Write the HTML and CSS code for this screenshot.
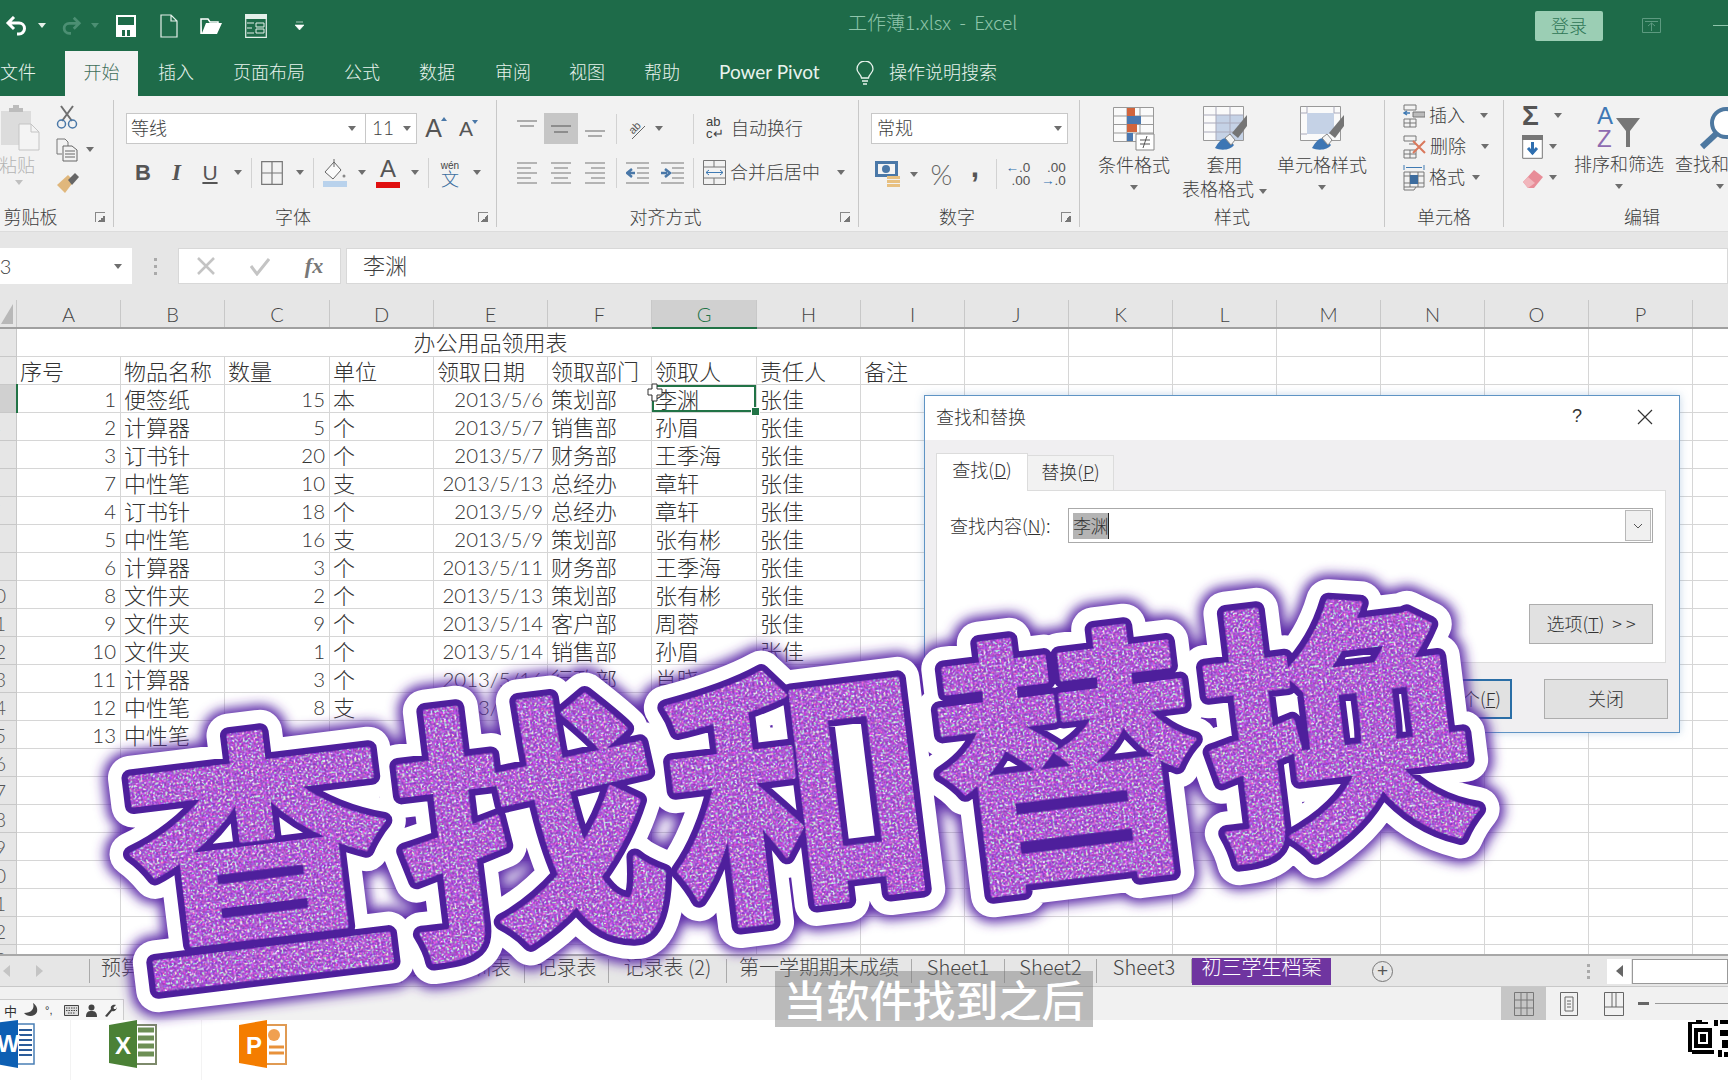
FILE: index.html
```html
<!DOCTYPE html>
<html lang="zh-CN">
<head>
<meta charset="utf-8">
<title>工作薄1.xlsx - Excel</title>
<link rel="stylesheet" href="styles.css">
</head>
<body>
<div class="app">
  <header class="titlebar">
    <div class="qat">
      <svg width="24" height="20" viewBox="0 0 24 20"><path d="M9 1 3 7l6 6M3 7h11a5.500 5.500 0 0 1 0 11h-2" fill="none" stroke="#fff" stroke-width="3"/></svg>
      <i class="caret light"></i>
      <svg class="redo" width="22" height="20" viewBox="0 0 24 20"><path d="M15 1l6 6-6 6M21 7H10a5.500 5.500 0 0 0 0 11h2" fill="none" stroke="#4c8f73" stroke-width="3"/></svg>
      <i class="caret dim"></i>
      <svg class="save" width="20" height="22" viewBox="0 0 20 22"><path d="M1 1h18v20H1z" fill="#1e6b49" stroke="#fff" stroke-width="2"/><path d="M1 10h18v11H1z" fill="#fff"/><path d="M6 15h3v6H6zM11 15h3v6h-3z" fill="#1e6b49"/></svg>
      <svg class="newdoc" width="18" height="24" viewBox="0 0 18 24"><path d="M1 1h10l6 6v16H1zM11 1v6h6" fill="none" stroke="#e4f0ea" stroke-width="1.200"/></svg>
      <svg class="open" width="23" height="20" viewBox="0 0 23 20"><path d="M1 6V18h16l5-11H6L2 17" fill="#fff"/><path d="M1 18V3h7l2 3h8v2" fill="none" stroke="#fff" stroke-width="1.500"/></svg>
      <svg class="form" width="22" height="24" viewBox="0 0 22 24"><path d="M.7.7h20.600v22.600H.7z" fill="none" stroke="#e4f0ea" stroke-width="1.200"/><path d="M0 0h22v5H0z" fill="#e4f0ea"/><path d="M2 9h7M2 14h5M2 19h7M11 9h8v4h-8zM11 15h8v4h-8z" fill="none" stroke="#e4f0ea"/></svg>
      <svg class="custom" width="9" height="10" viewBox="0 0 9 10"><path d="M1 1h7M0 4h9l-4.500 5z" fill="#fff" stroke="#fff" stroke-width=".6"/></svg>
    </div>
    <div class="doc-title">工作薄1.xlsx&nbsp; - &nbsp;Excel</div>
    <div class="win">
      <span class="login">登录</span>
      <svg class="restore" width="20" height="16" viewBox="0 0 20 16"><path d="M.5.500h18v14H.5zM3 3.500h13M9.500 13V5M6 8l3.500-3L13 8" fill="none" stroke="#5d9a80"/></svg>
      <i class="minimize"></i>
    </div>
  </header>

  <nav class="tabs">
    <span class="tab t-file">文件</span>
    <span class="tab active">开始</span>
    <span class="tab t-ins">插入</span>
    <span class="tab t-page">页面布局</span>
    <span class="tab t-f">公式</span>
    <span class="tab t-d">数据</span>
    <span class="tab t-r">审阅</span>
    <span class="tab t-v">视图</span>
    <span class="tab t-h">帮助</span>
    <span class="tab t-pp">Power Pivot</span>
    <span class="tab t-tell">
      <svg width="18" height="26" viewBox="0 0 18 26"><path d="M5.500 17C5 13 1 12 1 8a8 8 0 0 1 16 0c0 4-4 5-4.500 9zM6 20h6M7 23h4" fill="none" stroke="#e8f3ed" stroke-width="1.300"/></svg>
      <span class="tell-text">操作说明搜索</span>
    </span>
  </nav>

  <section class="ribbon">
    <div class="group g-clip">
      <div class="gbody clip-body">
        <div class="paste">
          <svg width="42" height="46" viewBox="0 0 42 46"><path d="M2 6h30v34H2z" fill="#dcdcdc"/><path d="M10 7V3h4V0h6v3h4v4z" fill="#bcbcbc"/><path d="M20 19h12l8 8v18H20z" fill="#f4f4f4" stroke="#c4c4c4"/><path d="M32 19v8h8" fill="none" stroke="#c4c4c4"/></svg>
          <span class="paste-l">粘贴</span>
          <i class="caret faint"></i>
        </div>
        <div class="clip-tools">
          <div class="cliprow"><svg width="22" height="24" viewBox="0 0 22 24"><path d="M5 1l11 15M17 1L6 16" stroke="#6f6f6f" stroke-width="2"/><circle cx="5.500" cy="19" r="4" fill="none" stroke="#4a78a8" stroke-width="1.500"/><circle cx="16.500" cy="19" r="4" fill="none" stroke="#4a78a8" stroke-width="1.500"/></svg></div>
          <div class="cliprow"><svg width="22" height="24" viewBox="0 0 22 24"><path d="M1 1h8l3 3v4M1 1v15h5" fill="none" stroke="#777"/><path d="M7 8h9l5 4v11H7zM9 13h10M9 16h10M9 19h10" fill="none" stroke="#666"/></svg><i class="caret clipc"></i></div>
          <div class="cliprow"><svg width="24" height="22" viewBox="0 0 24 22"><path d="M1 13 12 3l6 6-9 12z" fill="#e0b77c"/><path d="M12 8 19 1l4 4-7 8z" fill="#666"/></svg></div>
        </div>
      </div>
      <div class="glabel launch">剪贴板<i class="launcher"></i></div>
    </div>

    <div class="group g-font">
      <div class="gbody">
        <div class="row fr1">
          <div class="combo combo-font"><span class="c-name">等线</span><i class="caret"></i><span class="c-size">11</span><i class="caret"></i></div>
          <span class="grow-a">A<i class="up"></i></span>
          <span class="shrink-a">A<i class="down"></i></span>
        </div>
        <div class="row fr2">
          <b class="fmt">B</b><em class="fmt it">I</em><u class="fmt un">U</u><i class="caret"></i><i class="vsep"></i>
          <svg width="22" height="24" viewBox="0 0 22 24"><path d="M.7.700h20.600v22.600H.7zM11 1v22M1 12h20" fill="none" stroke="#777" stroke-width="1.200"/></svg><i class="caret"></i><i class="vsep"></i>
          <svg width="26" height="28" viewBox="0 0 26 28"><path d="M12 3 3 13l8 7 8-9z" fill="#fafafa" stroke="#666"/><path d="M12 0v8" stroke="#666"/><circle cx="22" cy="17" r="1.500" fill="#888"/><path d="M1 22h24v6H1z" fill="#b9d2ec"/></svg><i class="caret"></i>
          <span class="font-color">A</span><i class="caret"></i><i class="vsep"></i>
          <span class="wen"><small>wén</small>文</span><i class="caret"></i>
        </div>
      </div>
      <div class="glabel launch">字体<i class="launcher"></i></div>
    </div>

    <div class="group g-align">
      <div class="gbody">
        <div class="row ar">
          <svg width="20" height="20" viewBox="0 0 20 20"><path d="M0 2h20M3 7h14" stroke="#666"/></svg>
          <span class="on"><svg width="20" height="20" viewBox="0 0 20 20"><path d="M0 7h20M3 13h14" stroke="#555"/></svg></span>
          <svg width="20" height="20" viewBox="0 0 20 20"><path d="M0 12h20M3 17h14" stroke="#666"/></svg>
          <i class="vsep"></i>
          <svg width="20" height="22" viewBox="0 0 20 22"><path d="M5 21 18 8" stroke="#666"/><text class="orient" x="1" y="13" transform="rotate(-45 8 9)">ab</text></svg>
          <i class="caret"></i>
          <span></span><i class="vsep"></i>
          <span class="cmd"><span class="abc">ab<br>c↵</span>自动换行</span>
        </div>
        <div class="row ar">
          <svg width="20" height="24" viewBox="0 0 20 24"><path d="M0 2h20M0 7h14M0 12h20M0 17h14M0 22h20" stroke="#777"/></svg>
          <svg width="20" height="24" viewBox="0 0 20 24"><path d="M0 2h20M3 7h14M0 12h20M3 17h14M0 22h20" stroke="#777"/></svg>
          <svg width="20" height="24" viewBox="0 0 20 24"><path d="M0 2h20M6 7h14M0 12h20M6 17h14M0 22h20" stroke="#777"/></svg>
          <i class="vsep"></i>
          <svg width="23" height="24" viewBox="0 0 23 24"><path d="M0 2h23M11 7h12M11 12h12M11 17h12M0 22h23" stroke="#777"/><path d="M9 12H3M6 8l-5 4 5 4" fill="none" stroke="#4a78a8" stroke-width="2.500"/></svg>
          <svg width="23" height="24" viewBox="0 0 23 24"><path d="M0 2h23M11 7h12M11 12h12M11 17h12M0 22h23" stroke="#777"/><path d="M0 12h6M4 8l5 4-5 4" fill="none" stroke="#4a78a8" stroke-width="2.500"/></svg>
          <span></span><i class="vsep"></i>
          <span class="cmd merge"><svg width="23" height="25" viewBox="0 0 23 25"><path d="M.5.500h22v24H.5zM1 7h21M1 18h21M11 1v6M11 18v6" fill="none" stroke="#777"/><path d="M3 12.500h17M6 10l-3 2.500L6 15M17 10l3 2.500-3 2.500" fill="none" stroke="#3f7ab3"/></svg><span class="merge-text">合并后居中</span><i class="caret"></i></span>
        </div>
      </div>
      <div class="glabel launch">对齐方式<i class="launcher"></i></div>
    </div>

    <div class="group g-num">
      <div class="gbody">
        <div class="row nr1"><div class="combo combo-num"><span>常规</span><i class="caret"></i></div></div>
        <div class="row nr2">
          <svg width="26" height="26" viewBox="0 0 26 26"><path d="M0 0h23v16H0z" fill="#4a78a8"/><path d="M3 3h17v10H3z" fill="#f4f4f4"/><circle cx="11" cy="8" r="4" fill="#4a78a8"/><path d="M12 15h13v3H12zM12 19h13v3H12zM12 23h13v3H12z" fill="#e8c080"/></svg>
          <i class="caret"></i>
          <span class="pct">%</span>
          <span class="comma">,</span>
          <i class="vsep"></i>
          <span class="dec"><span><b>←</b>.0</span><span>.00</span></span>
          <span class="dec"><span>.00</span><span><b>→</b>.0</span></span>
        </div>
      </div>
      <div class="glabel launch">数字<i class="launcher"></i></div>
    </div>

    <div class="group g-style">
      <div class="gbody style-body">
        <div class="big">
          <svg width="42" height="44" viewBox="0 0 42 44"><path d="M.5.500h40v34H.5zM.5 9h40M.5 17.500h40M.5 26h40M14 .5v34M27 .5v34" fill="#fafafa" stroke="#999"/><path d="M14 1h8v8h-8z" fill="#d1643c"/><path d="M14 9h14v8H14z" fill="#4a78b0"/><path d="M14 17h10v8H14z" fill="#d1643c"/><path d="M14 26h6v8h-6z" fill="#4a78b0"/><path d="M23 27h18v16H23z" fill="#fff" stroke="#888"/><path d="M27 37h10M27 33h10M34 29l-4 12" stroke="#555" fill="none"/></svg>
          <span class="b-l">条件格式</span><i class="caret"></i>
        </div>
        <div class="big">
          <svg width="44" height="46" viewBox="0 0 44 46"><path d="M.5.500h40v34H.5z" fill="#fafafa" stroke="#999"/><path d="M13 9h27v25H13z" fill="#c5d2e6"/><path d="M.5 9h40M.5 17h40M.5 26h40M13 .5v34M27 .5v34" stroke="#aab" fill="none"/><path d="M24 32c-6 0-9 5-12 10 6 3 16 2 19-3z" fill="#3d76b4"/><path d="M22 32l6 7 4-5-5-6z" fill="#f4f4f4" stroke="#888"/><path d="M29 27 44 9v11l-9 12z" fill="#757575"/></svg>
          <span class="b-l">套用<br>表格格式<i class="caret inline"></i></span>
        </div>
        <div class="big">
          <svg width="44" height="46" viewBox="0 0 44 46"><path d="M.5.500h40v34H.5z" fill="#fafafa" stroke="#999"/><path d="M7 7h27v21H7z" fill="#c5d2e6"/><path d="M.5 7h6.500M34 7h6.500M.5 28h6.500M7 .5V7M34 .5V7" stroke="#aab"/><path d="M24 32c-6 0-9 5-12 10 6 3 16 2 19-3z" fill="#3d76b4"/><path d="M22 32l6 7 4-5-5-6z" fill="#f4f4f4" stroke="#888"/><path d="M29 27 44 9v11l-9 12z" fill="#757575"/></svg>
          <span class="b-l">单元格样式</span><i class="caret"></i>
        </div>
      </div>
      <div class="glabel">样式</div>
    </div>

    <div class="group g-cell">
      <div class="gbody cell-body">
        <div class="cellrow"><svg width="22" height="24" viewBox="0 0 22 24"><path d="M1 1h12v5H1zM1 15h12v8H1zM7 15v8M1 19h12" fill="none" stroke="#777"/><path d="M1 9h6M4 7l-3 2 3 2" fill="none" stroke="#3f7ab3" stroke-width="1.400"/><path d="M10 8h12v5H10z" fill="#bbb" stroke="#777"/></svg><span class="cell-text">插入</span><i class="caret c1"></i></div>
        <div class="cellrow"><svg width="23" height="24" viewBox="0 0 23 24"><path d="M1 1h12v5H1zM1 15h12v8H1zM7 15v8M1 19h12M6 9h7" fill="none" stroke="#777"/><path d="M10 6l12 12M22 6 10 18" stroke="#d9785c" stroke-width="2"/></svg><span class="cell-text">删除</span><i class="caret c1"></i></div>
        <div class="cellrow"><svg width="22" height="26" viewBox="0 0 22 26"><path d="M1 7h20v15H1zM7 7v15M15 7v15M1 11h20M1 18h20M1 22v3h10l2-3" fill="none" stroke="#777"/><path d="M7 10h8v9H7z" fill="#3d6c9e"/><path d="M1 0v5M21 0v5M3 2.500h16" stroke="#3f7ab3"/></svg><span class="cell-text">格式</span><i class="caret c2"></i></div>
      </div>
      <div class="glabel">单元格</div>
    </div>

    <div class="group g-edit">
      <div class="gbody edit-body">
        <div class="edit-col">
          <div class="editrow"><span class="sigma">Σ</span><i class="caret c3"></i></div>
          <div class="editrow"><svg width="21" height="24" viewBox="0 0 21 24"><path d="M.7.700h19.600v22.600H.7z" fill="#fff" stroke="#777"/><path d="M0 0h21v5H0z" fill="#777"/><path d="M10.500 7v12M6 13l4.500 5 4.500-5" fill="none" stroke="#2f6fb0" stroke-width="3"/></svg><i class="caret c4"></i></div>
          <div class="editrow"><svg width="22" height="22" viewBox="0 0 22 22"><path d="M1 15 12 3l9 7-9 11H6z" fill="#e88d98"/><path d="M6 21 1 15l5-5 7 6z" fill="#f1b6bc"/></svg><i class="caret c5"></i></div>
        </div>
        <div class="big b-sort">
          <svg width="44" height="44" viewBox="0 0 44 44"><text class="az a" x="0" y="18">A</text><text class="az z" x="0" y="41">Z</text><path d="M19 12h24L33 25v16h-4V25z" fill="#767676"/></svg>
          <span class="b-l">排序和筛选</span><i class="caret"></i>
        </div>
        <div class="big b-find">
          <svg width="44" height="44" viewBox="0 0 44 44"><circle cx="28" cy="17" r="14" fill="#fff" stroke="#4d78a0" stroke-width="4"/><path d="M18 28 4 41" stroke="#4d78a0" stroke-width="6"/></svg>
          <span class="b-l">查找和替换</span><i class="caret"></i>
        </div>
      </div>
      <div class="glabel">编辑</div>
    </div>
  </section>

  <section class="formula">
    <div class="namebox"><span>G3</span><i class="caret"></i></div>
    <div class="grip"><i></i><i></i><i></i></div>
    <div class="fx-box">
      <svg width="20" height="20" viewBox="0 0 20 20"><path d="M2 2l16 16M18 2 2 18" stroke="#c4c4c4" stroke-width="2.500"/></svg>
      <svg width="20" height="20" viewBox="0 0 20 20"><path d="M1 10l6 8L19 3" fill="none" stroke="#c4c4c4" stroke-width="3"/></svg>
      <span class="fx">fx</span>
    </div>
    <div class="finput">李渊</div>
  </section>

  <section class="sheet">
    <table class="grid">
      <colgroup><col class="c-rh"><col class="c-n"><col class="c-n"><col class="c-m"><col class="c-n"><col class="c-e"><col class="c-n"><col class="c-m"><col class="c-n"><col class="c-n"><col class="c-n"><col class="c-n"><col class="c-n"><col class="c-n"><col class="c-n"><col class="c-n"><col class="c-n"><col class="c-n"></colgroup>
      <thead>
        <tr><th class="corner"></th><th>A</th><th>B</th><th>C</th><th>D</th><th>E</th><th>F</th><th class="cur">G</th><th>H</th><th>I</th><th>J</th><th>K</th><th>L</th><th>M</th><th>N</th><th>O</th><th>P</th><th>Q</th></tr>
      </thead>
      <tbody>
        <tr><th>1</th><td colspan="9" class="ct">办公用品领用表</td><td></td><td></td><td></td><td></td><td></td><td></td><td></td><td></td></tr>
        <tr><th>2</th><td>序号</td><td>物品名称</td><td>数量</td><td>单位</td><td>领取日期</td><td>领取部门</td><td>领取人</td><td>责任人</td><td>备注</td><td></td><td></td><td></td><td></td><td></td><td></td><td></td><td></td></tr>
        <tr><th class="cur-row">3</th><td class="r">1</td><td>便签纸</td><td class="r">15</td><td>本</td><td class="r">2013/5/6</td><td>策划部</td><td class="sel">李渊</td><td>张佳</td><td></td><td></td><td></td><td></td><td></td><td></td><td></td><td></td><td></td></tr>
        <tr><th>4</th><td class="r">2</td><td>计算器</td><td class="r">5</td><td>个</td><td class="r">2013/5/7</td><td>销售部</td><td>孙眉</td><td>张佳</td><td></td><td></td><td></td><td></td><td></td><td></td><td></td><td></td><td></td></tr>
        <tr><th>5</th><td class="r">3</td><td>订书针</td><td class="r">20</td><td>个</td><td class="r">2013/5/7</td><td>财务部</td><td>王季海</td><td>张佳</td><td></td><td></td><td></td><td></td><td></td><td></td><td></td><td></td><td></td></tr>
        <tr><th>6</th><td class="r">7</td><td>中性笔</td><td class="r">10</td><td>支</td><td class="r">2013/5/13</td><td>总经办</td><td>章轩</td><td>张佳</td><td></td><td></td><td></td><td></td><td></td><td></td><td></td><td></td><td></td></tr>
        <tr><th>7</th><td class="r">4</td><td>订书针</td><td class="r">18</td><td>个</td><td class="r">2013/5/9</td><td>总经办</td><td>章轩</td><td>张佳</td><td></td><td></td><td></td><td></td><td></td><td></td><td></td><td></td><td></td></tr>
        <tr><th>8</th><td class="r">5</td><td>中性笔</td><td class="r">16</td><td>支</td><td class="r">2013/5/9</td><td>策划部</td><td>张有彬</td><td>张佳</td><td></td><td></td><td></td><td></td><td></td><td></td><td></td><td></td><td></td></tr>
        <tr><th>9</th><td class="r">6</td><td>计算器</td><td class="r">3</td><td>个</td><td class="r">2013/5/11</td><td>财务部</td><td>王季海</td><td>张佳</td><td></td><td></td><td></td><td></td><td></td><td></td><td></td><td></td><td></td></tr>
        <tr><th>10</th><td class="r">8</td><td>文件夹</td><td class="r">2</td><td>个</td><td class="r">2013/5/13</td><td>策划部</td><td>张有彬</td><td>张佳</td><td></td><td></td><td></td><td></td><td></td><td></td><td></td><td></td><td></td></tr>
        <tr><th>11</th><td class="r">9</td><td>文件夹</td><td class="r">9</td><td>个</td><td class="r">2013/5/14</td><td>客户部</td><td>周蓉</td><td>张佳</td><td></td><td></td><td></td><td></td><td></td><td></td><td></td><td></td><td></td></tr>
        <tr><th>12</th><td class="r">10</td><td>文件夹</td><td class="r">1</td><td>个</td><td class="r">2013/5/14</td><td>销售部</td><td>孙眉</td><td>张佳</td><td></td><td></td><td></td><td></td><td></td><td></td><td></td><td></td><td></td></tr>
        <tr><th>13</th><td class="r">11</td><td>计算器</td><td class="r">3</td><td>个</td><td class="r">2013/5/16</td><td>行政部</td><td>肖晓</td><td>张佳</td><td></td><td></td><td></td><td></td><td></td><td></td><td></td><td></td><td></td></tr>
        <tr><th>14</th><td class="r">12</td><td>中性笔</td><td class="r">8</td><td>支</td><td class="r">2013/5/17</td><td></td><td></td><td></td><td></td><td></td><td></td><td></td><td></td><td></td><td></td><td></td><td></td></tr>
        <tr><th>15</th><td class="r">13</td><td>中性笔</td><td></td><td></td><td></td><td></td><td></td><td></td><td></td><td></td><td></td><td></td><td></td><td></td><td></td><td></td><td></td></tr>
        <tr><th>16</th><td></td><td></td><td></td><td></td><td></td><td></td><td></td><td></td><td></td><td></td><td></td><td></td><td></td><td></td><td></td><td></td><td></td></tr>
        <tr><th>17</th><td></td><td></td><td></td><td></td><td></td><td></td><td></td><td></td><td></td><td></td><td></td><td></td><td></td><td></td><td></td><td></td><td></td></tr>
        <tr><th>18</th><td></td><td></td><td></td><td></td><td></td><td></td><td></td><td></td><td></td><td></td><td></td><td></td><td></td><td></td><td></td><td></td><td></td></tr>
        <tr><th>19</th><td></td><td></td><td></td><td></td><td></td><td></td><td></td><td></td><td></td><td></td><td></td><td></td><td></td><td></td><td></td><td></td><td></td></tr>
        <tr><th>20</th><td></td><td></td><td></td><td></td><td></td><td></td><td></td><td></td><td></td><td></td><td></td><td></td><td></td><td></td><td></td><td></td><td></td></tr>
        <tr><th>21</th><td></td><td></td><td></td><td></td><td></td><td></td><td></td><td></td><td></td><td></td><td></td><td></td><td></td><td></td><td></td><td></td><td></td></tr>
        <tr><th>22</th><td></td><td></td><td></td><td></td><td></td><td></td><td></td><td></td><td></td><td></td><td></td><td></td><td></td><td></td><td></td><td></td><td></td></tr>
        <tr><th>23</th><td></td><td></td><td></td><td></td><td></td><td></td><td></td><td></td><td></td><td></td><td></td><td></td><td></td><td></td><td></td><td></td><td></td></tr>
      </tbody>
    </table>
  </section>

  <section class="sheettabs">
    <div class="nav"><i class="tri-l"></i><i class="tri-r"></i></div>
    <span class="st st-first">预算表</span>
    <span class="st st-end">员工培训表</span>
    <span class="st st-a">记录表</span>
    <span class="st st-b">记录表 (2)</span>
    <span class="st st-c">第一学期期末成绩</span>
    <span class="st st-d">Sheet1</span>
    <span class="st st-e">Sheet2</span>
    <span class="st st-f">Sheet3</span>
    <span class="st st-active">初三学生档案</span>
    <span class="add">+</span>
    <span class="dots"><i></i><i></i><i></i></span>
    <span class="scroll-left"><i class="tri-l dark"></i></span>
    <span class="scroll-thumb"></span>
  </section>

  <footer class="statusbar">
    <div class="ime"><span class="ime-c">中</span>
      <svg width="14" height="14" viewBox="0 0 14 14"><path d="M9 0c2 6-2 10-9 10 3 4 11 4 13-1C14 5 12 2 9 0z" fill="#444"/></svg>
      <span class="ime-p">°,</span>
      <svg width="15" height="11" viewBox="0 0 15 11"><path d="M.5.500h14v10H.5z" fill="#ddd" stroke="#444"/><path d="M2 3h11M2 5.500h11M4 8h7" stroke="#444" stroke-dasharray="1.500 1"/></svg>
      <svg width="11" height="13" viewBox="0 0 11 13"><circle cx="5.500" cy="3.500" r="3" fill="#444"/><path d="M0 13c0-5 2-6 5.500-6S11 8 11 13z" fill="#444"/></svg>
      <svg width="13" height="13" viewBox="0 0 13 13"><path d="M1 12 7 5c-1-3 2-5 5-4L9.500 3.500 10 5l2 0 1-2c0 3-3 5-5 4l-5 6z" fill="#444"/></svg>
    </div>
    <div class="views">
      <span class="view on"><svg width="20" height="24" viewBox="0 0 20 24"><path d="M.5.500h19v23H.5zM7 1v22M13 1v22M1 8h18M1 16h18" fill="none" stroke="#777"/></svg></span>
      <span class="view"><svg width="18" height="24" viewBox="0 0 18 24"><path d="M.5.500h17v23H.5zM5 5h8v14H5zM7 9h4M7 12h4M7 15h4" fill="none" stroke="#666"/></svg></span>
      <span class="view"><svg width="20" height="24" viewBox="0 0 20 24"><path d="M.5.500h19v23H.5zM1 15h18M8 1v14M12 1v14" fill="none" stroke="#666"/></svg></span>
      <i class="zoom-minus"></i><i class="zoom-track"></i>
    </div>
  </footer>

  <section class="taskbar">
    <span class="app-icon ai-w"><svg width="40" height="48" viewBox="0 0 40 48"><path d="M22 4h17v40H22z" fill="#fff" stroke="#4a7fb5" stroke-width="1.500"/><path d="M24 10h13M24 15h13M24 20h13M24 25h13M24 30h13M24 35h13" stroke="#2a5c9a" stroke-width="2"/><path d="M0 3l23-3v48L0 44z" fill="#0d5fb3"/><text class="ai-letter" x="2" y="32">W</text></svg></span>
    <span class="app-icon ai-x"><svg width="48" height="48" viewBox="0 0 48 48"><path d="M27 5h20v39H27z" fill="#fff" stroke="#7d8a6b" stroke-width="2"/><path d="M29 10h16M29 18h16M29 26h16M29 34h16" stroke="#6d8f55" stroke-width="5"/><path d="M0 5l28-5v48L0 43z" fill="#4b8136"/><text class="ai-letter" x="6" y="34">X</text></svg></span>
    <span class="app-icon ai-p"><svg width="48" height="48" viewBox="0 0 48 48"><path d="M27 5h20v39H27z" fill="#fff" stroke="#e09a52" stroke-width="2"/><circle cx="35" cy="15" r="6" fill="#f0a050"/><path d="M30 27h15M30 33h15" stroke="#e8913a" stroke-width="3"/><path d="M0 5l28-5v48L0 43z" fill="#f47d00"/><text class="ai-letter" x="7" y="34">P</text></svg></span>
    <svg class="qr" width="40" height="37" viewBox="0 0 40 37"><path d="M0 2h4v30H0zM4 30h22v4H4zM4 2h4v-2h6v2h6v2H4zM6 8h18v20H6zM26 0h4v6h-4zM32 0h8v4h-8zM32 10h8v6h-8zM34 20h6v8h-6zM30 30h4v7h-4zM36 32h4v5h-4z" fill="#000"/><path d="M10 12h10v12H10z" fill="#fff"/><path d="M12 14h6v8h-6z" fill="#000"/></svg>
  </section>
</div>

<aside class="dialog">
  <div class="d-title"><span>查找和替换</span><span class="d-help">?</span>
    <svg width="16" height="16" viewBox="0 0 16 16"><path d="M1 1l14 14M15 1 1 15" stroke="#333" stroke-width="1.200"/></svg>
  </div>
  <div class="d-body">
    <div class="d-tabs"><span class="d-tab on">查找(<u>D</u>)</span><span class="d-tab">替换(<u>P</u>)</span></div>
    <div class="d-panel">
      <div class="d-row">
        <label>查找内容(<u>N</u>):</label>
        <div class="d-input"><span class="d-sel">李渊</span><span class="d-caret"></span>
          <span class="d-drop"><svg width="10" height="6" viewBox="0 0 10 6"><path d="M1 1l4 4 4-4" fill="none" stroke="#555"/></svg></span>
        </div>
      </div>
      <button class="d-btn d-opt">选项(<u>T</u>)&nbsp; &gt; &gt;</button>
    </div>
    <div class="d-actions">
      <button class="d-btn d-next">查找下一个(<u>F</u>)</button>
      <button class="d-btn">关闭</button>
    </div>
  </div>
</aside>

<svg class="cursor" width="16" height="20" viewBox="0 0 16 20"><path d="M5 1h5v5h5v6h-5v6H5v-6H1V6h4z" fill="#fff" stroke="#333"/></svg>

<svg class="headline" width="1728" height="1080" viewBox="0 0 1728 1080">
  <defs>
    <filter id="glow" x="-10%" y="-20%" width="120%" height="140%"><feGaussianBlur stdDeviation="6"/></filter>
    <filter id="glitter" x="-5%" y="-10%" width="110%" height="120%" color-interpolation-filters="sRGB">
      <feTurbulence type="fractalNoise" baseFrequency="0.48" numOctaves="1" seed="11"/>
      <feColorMatrix type="matrix" values="2 1.200 0 0 -1.100  0 3 0 0 -1  .8 .8 1.800 0 -1.200  0 0 0 0 1"/>
      <feComponentTransfer>
        <feFuncR type="discrete" tableValues=".54 .60 .66 .72 .78 .94"/>
        <feFuncG type="discrete" tableValues=".24 .28 .34 .38 .46 .90"/>
        <feFuncB type="discrete" tableValues=".72 .76 .80 .85 .90 1"/>
      </feComponentTransfer>
      <feComposite in2="SourceAlpha" operator="in"/>
    </filter>
    <text id="headline-text" class="headline-text" x="0" y="0">查找和替换</text>
  </defs>
  <g transform="translate(140 976) rotate(-7)">
    <use href="#headline-text" class="hl-glow" filter="url(#glow)"/>
    <use href="#headline-text" class="hl-white"/>
    <use href="#headline-text" class="hl-dark"/>
    <use href="#headline-text" class="hl-fill" filter="url(#glitter)"/>
  </g>
</svg>

<div class="subtitle">当软件找到之后</div>
</body>
</html>
```

FILE: styles.css
```css
* { box-sizing: border-box; }
html, body { margin: 0; padding: 0; width: 1728px; height: 1080px; overflow: hidden; background: #fff; }
body { position: relative; font-family: "Noto Sans CJK SC", "Noto Sans", sans-serif; font-weight: 300; color: #3e3e3e; font-size: 18px; }
i { font-style: normal; display: block; }
.app { width: 1728px; height: 1080px; display: flex; flex-direction: column; overflow: hidden; }

.caret { width: 0; height: 0; border-left: 4.5px solid transparent; border-right: 4.5px solid transparent; border-top: 5px solid #6e6e6e; }
.caret.light { border-top-color: #e6f0ea; }
.caret.dim { border-top-color: #4c8f73; }
.caret.faint { border-top-color: #c0c0c0; }
.vsep { width: 1px; height: 30px; background: #d2d2d2; }

/* title */
.titlebar { height: 51px; background: #1e6b49; display: flex; align-items: center; flex: none; position: relative; }
.qat { display: flex; align-items: center; padding: 0 0 0 5px; height: 48px; }
.qat .caret { margin-left: 9px; }
.qat .redo { margin-left: 14px; }
.qat .save { margin-left: 17px; }
.qat .newdoc { margin-left: 24px; }
.qat .open { margin-left: 22px; }
.qat .form { margin-left: 22px; }
.qat .custom { margin-left: 28px; }
.doc-title { position: absolute; left: 848px; top: 8px; font-size: 19px; color: #8fc5ab; line-height: 28px; }
.win { margin-left: auto; display: flex; align-items: center; height: 48px; }
.login { width: 68px; height: 30px; background: #9bceb4; border-radius: 2px; color: #2e7555; text-align: center; line-height: 28px; font-size: 18px; }
.restore { margin-left: 39px; }
.minimize { margin-left: 51px; width: 15px; height: 1px; background: #8fc5ab; }

/* tabs */
.tabs { height: 45px; background: #1e6b49; display: flex; flex: none; align-items: stretch; }
.tab { color: #e8f3ed; font-size: 18px; line-height: 41px; height: 45px; white-space: nowrap; }
.tab.active { background: #f2f2f2; color: #3f6f5a; width: 73px; text-align: center; }
.t-file { width: 65px; padding-left: 0; }
.t-ins { margin-left: 20px; width: 75px; }
.t-page { width: 111px; }
.t-f { width: 75px; }
.t-d { width: 76px; }
.t-r { width: 74px; }
.t-v { width: 75px; }
.t-h { width: 75px; }
.t-pp { width: 137px; font-family: "Lato", "Noto Sans", sans-serif; font-size: 19px; font-weight: 400; }
.t-tell { display: flex; align-items: center; gap: 15px; }
.tell-text { margin-top: -4px; }

/* ribbon */
.ribbon { height: 136px; flex: none; background: #f2f2f2; display: flex; padding: 4px 0; border-bottom: 1px solid #dcdcdc; margin-left: -28px; width: 1808px; }
.group { display: flex; flex-direction: column; border-right: 1px solid #c8c8c8; flex: none; }
.gbody { height: 106px; }
.glabel { height: 24px; line-height: 24px; padding-top: 1px; text-align: center; position: relative; font-size: 18px; color: #3e3e3e; }
.glabel.launch { padding-right: 24px; }
.launcher { position: absolute; right: 8px; top: 9px; width: 10px; height: 10px; border-left: 1px solid #888; border-top: 1px solid #888; }
.launcher::after { content: ""; position: absolute; left: 2px; top: 2px; width: 7px; height: 7px; background: linear-gradient(135deg, transparent 50%, #777 50%); }
.g-clip { width: 142px; }
.g-font { width: 383px; }
.g-align { width: 362px; }
.g-num { width: 221px; }
.g-style { width: 305px; }
.g-cell { width: 119px; }
.g-edit { width: 276px; border-right: 0; }

.clip-body { display: flex; }
.paste { width: 84px; padding: 5px 0 0 6px; display: flex; flex-direction: column; align-items: center; }
.paste > svg { margin-left: 6px; }
.paste-l { color: #b4b4b4; line-height: 22px; margin-top: 2px; }
.paste .caret { margin-top: 5px; margin-left: 3px; }
.clip-tools { flex: 1; }
.cliprow { height: 33px; display: flex; align-items: center; gap: 8px; }
.clipc { margin-left: 0; }

.row { display: grid; height: 31px; align-items: center; justify-items: center; }
.gbody > .row:first-child { margin-top: 13px; }
.gbody > .row + .row { margin-top: 13px; }
.fr1 { padding-left: 12px; grid-template-columns: 291px 33px 32px; }
.fr2 { padding-left: 12px; grid-template-columns: 34px 33px 34px 22px 4px 38px 18px 8px 36px 18px 34px 20px 6px 38px 16px; }
.combo { height: 31px; background: #fff; border: 1px solid #c8c8c8; display: flex; align-items: center; font-size: 18px; line-height: 27px; }
.combo > span { padding-bottom: 2px; }
.combo-font { width: 291px; justify-self: stretch; }
.c-name { width: 221px; padding-left: 4px; }
.combo-font > .caret:nth-child(2) { margin-right: 5px; }
.c-size { border-left: 1px solid #c8c8c8; height: 29px; margin-left: 4px; padding-left: 6px; width: 38px; line-height: 28px; font-family: "Lato", sans-serif; font-size: 19px; }
.grow-a, .shrink-a { font-family: "Liberation Sans", sans-serif; position: relative; color: #555; font-weight: 400; }
.grow-a { font-size: 25px; }
.shrink-a { font-size: 21px; }
.up, .down { position: absolute; left: 100%; top: 3px; width: 0; height: 0; border-left: 3.5px solid transparent; border-right: 3.5px solid transparent; margin-left: -1px; }
.up { border-bottom: 4px solid #4a78a8; }
.down { border-top: 4px solid #4a78a8; }
.fmt { font-family: "Liberation Sans", sans-serif; font-size: 21px; color: #555; font-style: normal; }
b.fmt { font-weight: 700; font-size: 22px; }
.it { font-family: "Liberation Serif", serif; font-style: italic; font-weight: 700; font-size: 23px; }
.un { font-weight: 400; }
.font-color { font-family: "Liberation Sans", sans-serif; font-size: 24px; line-height: 24px; color: #555; border-bottom: 6px solid #e01010; width: 24px; text-align: center; height: 31px; font-weight: 400; }
.wen { display: flex; flex-direction: column; align-items: center; color: #3d6f9f; line-height: 15px; font-size: 18px; }
.wen small { font-size: 10px; color: #444; line-height: 11px; font-family: "Liberation Sans", sans-serif; }

.ar { padding-left: 13px; grid-template-columns: 34px 34px 34px 8px 34px 10px 26px 7px 1fr; }
.ar .on { width: 34px; height: 31px; background: #c6c6c6; display: flex; align-items: center; justify-content: center; }
.orient { font-size: 11px; fill: #555; font-family: "Liberation Sans", sans-serif; }
.cmd { display: flex; align-items: center; justify-self: start; padding-left: 9px; gap: 8px; color: #3e3e3e; white-space: nowrap; line-height: 27px; padding-bottom: 2px; }
.abc { font-family: "Liberation Sans", sans-serif; font-size: 13px; line-height: 12px; width: 17px; }
.cmd.merge { padding-left: 6px; gap: 4px; padding-bottom: 0; }
.merge-text { margin-top: -2px; }
.merge .caret { margin-left: 13px; }
.ar:nth-child(2) { grid-template-columns: 34px 34px 34px 8px 35px 35px 0 7px 1fr; }

.nr1 { padding-left: 12px; grid-template-columns: 197px; }
.combo-num { width: 197px; justify-content: space-between; padding: 0 5px; }
.nr2 { padding-left: 12px; grid-template-columns: 34px 18px 37px 30px 12px 32px 39px; }
.pct { font-family: "Lato", sans-serif; font-size: 28px; color: #666; }
.comma { font-family: "Liberation Sans", sans-serif; font-size: 30px; font-weight: 700; color: #555; line-height: 8px; height: 22px; }
.dec { font-family: "Liberation Sans", sans-serif; font-size: 13.500px; line-height: 13px; display: flex; flex-direction: column; align-items: flex-end; color: #555; }
.dec b { color: #2f6fb0; font-weight: 700; }

.style-body { display: flex; padding: 6px 0 0 11px; }
.big { display: flex; flex-direction: column; align-items: center; flex: none; }
.big > svg { height: 46px; }
.b-l { line-height: 24px; text-align: center; white-space: nowrap; position: relative; }
.big > .caret { margin-top: 9px; }
.caret.inline { display: inline-block; margin-left: 5px; vertical-align: middle; }
.style-body .big:nth-child(1) { width: 86px; }
.style-body .big:nth-child(2) { width: 95px; }
.style-body .big:nth-child(3) { width: 100px; }

.cellrow { height: 31px; display: flex; align-items: center; padding-left: 18px; gap: 4px; line-height: 26px; }
.cell-text { margin-top: -3px; }
.c1 { margin-left: 11px; }
.c2 { margin-left: 3px; }

.edit-body { display: flex; }
.edit-col { width: 66px; padding-left: 18px; }
.editrow { height: 31px; display: flex; align-items: center; }
.sigma { font-family: "Liberation Sans", sans-serif; font-size: 28px; font-weight: 700; color: #555; width: 26px; line-height: 30px; }
.c3 { margin-left: 6px; }
.c4 { margin-left: 6px; }
.c5 { margin-left: 5px; }
.b-sort { width: 98px; padding-top: 5px; }
.b-find { width: 104px; padding-top: 5px; }
.az { font-family: "Liberation Sans", sans-serif; font-size: 24px; font-weight: 400; }
.a { fill: #3f78b5; }
.z { fill: #8e6bb0; }

/* formula */
.formula { height: 68px; flex: none; background: #e6e6e6; display: flex; padding-top: 16px; }
.namebox { margin-left: -20px; width: 152px; height: 36px; background: #fff; display: flex; align-items: center; justify-content: space-between; padding: 0 10px 0 5px; font-family: "Lato", sans-serif; font-size: 20px; }
.grip { width: 46px; display: flex; flex-direction: column; align-items: center; justify-content: center; gap: 4px; height: 36px; }
.grip i { width: 3px; height: 3px; background: #aaa; }
.fx-box { width: 163px; height: 36px; background: #fff; border: 1px solid #d8d8d8; display: grid; grid-template-columns: 54px 54px 54px; justify-items: center; align-items: center; }
.fx { font-family: "Liberation Serif", serif; font-style: italic; font-size: 22px; font-weight: 700; color: #777; }
.finput { margin-left: 5px; flex: 1; height: 36px; background: #fff; padding-left: 16px; font-size: 22px; line-height: 30px; border: 1px solid #d8d8d8; color: #3e3e3e; }

/* sheet */
.sheet { height: 654px; flex: none; overflow: hidden; background: #fff; }
.grid { border-collapse: collapse; table-layout: fixed; width: 1821px; margin-left: -28px; font-size: 22px; color: #333; }
.c-rh { width: 44px; }
.c-n { width: 104px; }
.c-m { width: 105px; }
.c-e { width: 114px; }
.grid tr { height: 28px; }
.grid thead th { background: #e6e6e6; height: 28px; border-right: 1px solid #c8c8c8; border-bottom: 2px solid #a0a0a0; font-weight: 300; font-family: "Lato", sans-serif; font-size: 20px; line-height: 24px; color: #444; padding: 0; }
.grid thead th.cur { background: #d0d0d0; border-bottom: 2px solid #217346; color: #217346; }
.grid thead th.corner { position: relative; }
.grid thead th.corner::after { content: ""; position: absolute; right: 3px; bottom: 3px; width: 0; height: 0; border-left: 12px solid transparent; border-bottom: 20px solid #b8b8b8; }
.grid tbody th { background: #e6e6e6; border: 1px solid #c8c8c8; font-weight: 300; font-family: "Lato", sans-serif; font-size: 20px; padding: 0; text-align: center; color: #555; line-height: 24px; }
.grid tbody th.cur-row { background: #d0d0d0; border-right: 2px solid #217346; color: #217346; }
.grid td { border: 1px solid #d6d6d6; padding: 0 3px 1px; height: 28px; line-height: 25px; white-space: nowrap; overflow: hidden; }
.grid td.r { text-align: right; font-family: "Lato", sans-serif; font-size: 20.400px; padding: 1px 4px 0 3px; }
.grid td.ct { text-align: center; padding-bottom: 2px; }
.grid td.sel { box-shadow: inset 0 0 0 2px #217346; position: relative; overflow: visible; }
.grid td.sel::after { content: ""; position: absolute; right: -4px; bottom: -4px; width: 7px; height: 7px; background: #217346; border: 1px solid #fff; }

/* sheet tabs */
.sheettabs { height: 33px; flex: none; background: #e6e6e6; border-top: 2px solid #a8a8a8; display: flex; align-items: center; font-size: 20px; color: #444; border-bottom: 1px solid #c8c8c8; }
.nav { width: 90px; display: flex; padding-left: 3px; gap: 26px; border-right: 1px solid #aaa; height: 24px; align-items: center; }
.tri-l, .tri-r { width: 0; height: 0; border-top: 6px solid transparent; border-bottom: 6px solid transparent; }
.tri-l { border-right: 7px solid #c4c4c4; }
.tri-r { border-left: 7px solid #c4c4c4; }
.tri-l.dark { border-right-color: #666; }
.st { line-height: 15px; height: 24px; border-right: 1px solid #aaa; white-space: nowrap; text-align: center; flex: none; }
.st-first { width: 312px; padding-left: 11px; text-align: left; }
.st-end { width: 123px; text-align: right; padding-right: 13px; }
.st-a { width: 84px; }
.st-b { width: 118px; }
.st-c { width: 185px; }
.st-d { width: 93px; }
.st-e { width: 92px; }
.st-f { width: 95px; }
.st-active { background: #6f35a0; color: #fff; height: 27px; line-height: 18px; width: 139px; border: 0; }
.add { margin-left: 41px; width: 21px; height: 21px; border: 1px solid #777; border-radius: 50%; text-align: center; line-height: 17px; font-family: "Liberation Sans", sans-serif; font-size: 19px; color: #555; }
.dots { margin-left: 194px; display: flex; flex-direction: column; gap: 3px; }
.dots i { width: 3px; height: 3px; background: #aaa; }
.scroll-left { margin-left: 17px; width: 24px; height: 25px; background: #fff; display: flex; align-items: center; justify-content: center; }
.scroll-thumb { margin-left: 1px; flex: 1; height: 25px; background: #fff; border: 1px solid #999; }

/* status */
.statusbar { height: 33px; flex: none; background: #f1f1f1; display: flex; align-items: flex-end; justify-content: space-between; }
.ime { width: 124px; height: 21px; background: #f6f6f6; border: 1px solid #ccc; border-left: 0; border-bottom: 0; display: flex; align-items: center; gap: 7px; padding-left: 4px; font-size: 13px; color: #333; }
.ime-c { font-weight: 400; }
.ime-p { font-size: 11px; width: 12px; font-family: "Liberation Sans", sans-serif; }
.views { display: flex; align-items: stretch; height: 33px; width: 227px; }
.view { width: 45px; display: flex; align-items: center; justify-content: center; }
.view.on { background: #c6c6c6; }
.zoom-minus { width: 11px; height: 3px; background: #666; align-self: center; margin-left: 2px; }
.zoom-track { flex: 1; height: 1px; background: #999; align-self: center; margin-left: 6px; }

/* taskbar */
.taskbar { flex: 1; background: #fff; display: flex; align-items: flex-start; position: relative; }
.app-icon { display: block; }
.ai-w { margin-left: -5px; width: 76px; border-right: 1px solid #f3f3f3; height: 60px; padding: 0; }
.ai-x { width: 131px; padding-left: 38px; border-right: 1px solid #f3f3f3; height: 60px; }
.ai-p { padding-left: 37px; }
.ai-letter { font-family: "Liberation Sans", sans-serif; font-weight: 700; font-size: 24px; fill: #fff; }
.qr { margin-left: auto; }

/* dialog */
.dialog { position: absolute; left: 924px; top: 395px; width: 756px; height: 338px; background: #fff; border: 1px solid #5f94c4; box-shadow: 0 0 8px rgba(90, 140, 190, .35); display: flex; flex-direction: column; font-size: 18px; color: #333; }
.d-title { height: 44px; display: flex; align-items: center; padding: 0 26px 3px 11px; flex: none; }
.d-title > span:first-child { margin-top: -2px; }
.d-help { margin-left: auto; margin-right: 55px; font-family: "Liberation Sans", sans-serif; }
.d-body { flex: 1; background: #f0eff1; padding: 13px 13px 0 11px; display: flex; flex-direction: column; }
.d-tabs { display: flex; height: 37px; align-items: flex-end; flex: none; }
.d-tab { width: 86px; height: 35px; background: #f2f2f2; border: 1px solid #dcdcdc; border-left: 0; border-bottom: 0; text-align: center; line-height: 31px; }
.d-tab.on { width: 92px; height: 38px; background: #fff; border: 1px solid #dcdcdc; border-bottom: 0; margin-bottom: -1px; position: relative; z-index: 1; }
.d-panel { height: 173px; background: #fff; border: 1px solid #dcdcdc; padding: 17px 12px 18px 13px; display: flex; flex-direction: column; justify-content: space-between; align-items: stretch; }
.d-row { display: flex; align-items: center; }
.d-row label { width: 118px; white-space: nowrap; padding-bottom: 2px; }
.d-input { flex: 1; height: 35px; border: 1px solid #aaa; display: flex; align-items: center; padding-left: 4px; background: #fff; }
.d-sel { background: #b4b4b4; line-height: 24px; height: 26px; letter-spacing: -.5px; }
.d-caret { width: 1px; height: 26px; background: #222; }
.d-drop { margin-left: auto; width: 26px; height: 31px; margin-right: 1px; background: #f0f0f0; border: 1px solid #b8b8b8; display: flex; align-items: center; justify-content: center; }
.d-btn { font: inherit; font-weight: 300; color: #333; width: 124px; height: 40px; background: #e1e1e1; border: 1px solid #adadad; padding: 0 0 2px; white-space: nowrap; }
.d-opt { align-self: flex-end; }
.d-actions { display: flex; justify-content: flex-end; gap: 32px; margin-top: 16px; margin-right: -2px; }
.d-next { border: 2px solid #2a6ea6; padding-right: 12px; }

.cursor { position: absolute; left: 647px; top: 383px; }

/* headline */
.headline { position: absolute; left: 0; top: 0; pointer-events: none; }
.headline-text { font-family: "Noto Sans CJK SC", sans-serif; font-weight: 700; font-size: 268px; letter-spacing: 3px; }
.hl-glow { fill: #5b2aa8; stroke: #5b2aa8; stroke-width: 54px; stroke-linejoin: round; }
.hl-white { fill: #fff; stroke: #fff; stroke-width: 44px; stroke-linejoin: round; }
.hl-dark { fill: #4e1f9c; stroke: #4e1f9c; stroke-width: 17px; stroke-linejoin: round; }
.hl-fill { fill: #a050d0; stroke: #a050d0; stroke-width: 4px; stroke-linejoin: round; }

.subtitle { position: absolute; left: 775px; top: 971px; width: 318px; height: 56px; background: rgba(120, 120, 120, .45); color: #fff; font-size: 43px; font-weight: 500; text-align: center; line-height: 54px; white-space: nowrap; }
```
